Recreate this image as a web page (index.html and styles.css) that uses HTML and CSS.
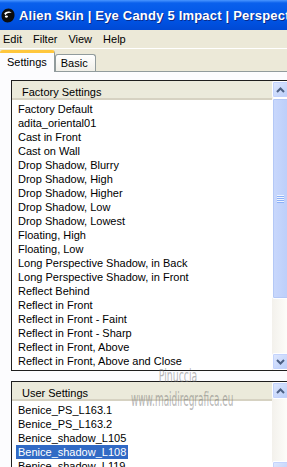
FILE: index.html
```html
<!DOCTYPE html>
<html lang="en">
<head>
    <meta charset="UTF-8">
    <title>Eye Candy 5 Impact</title>
    <link rel="stylesheet" href="styles.css">
</head>
<body>
    <div class="window">
        <div class="title-bar">
            <svg class="app-icon" width="14" height="15" viewBox="0 0 14 15">
                <path d="M7.5 0.5 C11.5 0.5 13.5 3.5 13.5 7 C13.5 11.5 10.5 14.5 6.5 14.5 C2.8 14.5 0.5 11.5 0.5 8 C0.5 3.8 3.5 0.5 7.5 0.5 Z" fill="#0d0d0d"/>
                <path d="M3.2 5.6 C4.8 3.2 8.6 2.8 10.6 5 C8.4 4.4 6 5 4.4 7.2 Z" fill="#fff"/>
                <ellipse cx="5.4" cy="8.6" rx="1.6" ry="1.1" fill="#fff"/>
            </svg>
            <span class="title-text">Alien Skin | Eye Candy 5 Impact | Perspective Shadow</span>
        </div>

        <div class="menu-bar">
            <span class="menu-item">Edit</span>
            <span class="menu-item">Filter</span>
            <span class="menu-item">View</span>
            <span class="menu-item">Help</span>
        </div>

        <div class="tab-strip">
            <div class="tab tab-active">Settings</div>
            <div class="tab">Basic</div>
        </div>

        <div class="tab-panel">
            <!-- factory presets -->
            <div class="listbox listbox-factory">
                <div class="list-main">
                    <div class="list-header">Factory Settings</div>
                    <ul class="list-items">
                        <li><span>Factory Default</span></li>
                        <li><span>adita_oriental01</span></li>
                        <li><span>Cast in Front</span></li>
                        <li><span>Cast on Wall</span></li>
                        <li><span>Drop Shadow, Blurry</span></li>
                        <li><span>Drop Shadow, High</span></li>
                        <li><span>Drop Shadow, Higher</span></li>
                        <li><span>Drop Shadow, Low</span></li>
                        <li><span>Drop Shadow, Lowest</span></li>
                        <li><span>Floating, High</span></li>
                        <li><span>Floating, Low</span></li>
                        <li><span>Long Perspective Shadow, in Back</span></li>
                        <li><span>Long Perspective Shadow, in Front</span></li>
                        <li><span>Reflect Behind</span></li>
                        <li><span>Reflect in Front</span></li>
                        <li><span>Reflect in Front - Faint</span></li>
                        <li><span>Reflect in Front - Sharp</span></li>
                        <li><span>Reflect in Front, Above</span></li>
                        <li><span>Reflect in Front, Above and Close</span></li>
                    </ul>
                </div>
                <div class="scrollbar">
                    <div class="sb-button">
                        <svg width="9" height="6" viewBox="0 0 9 6"><polyline points="1,5 4.5,1.5 8,5" fill="none" stroke="#4d6185" stroke-width="2"/></svg>
                    </div>
                    <div class="sb-thumb sb-thumb-factory">
                        <div class="grip"></div>
                    </div>
                    <div class="sb-track"></div>
                    <div class="sb-button">
                        <svg width="9" height="6" viewBox="0 0 9 6"><polyline points="1,1 4.5,4.5 8,1" fill="none" stroke="#4d6185" stroke-width="2"/></svg>
                    </div>
                </div>
            </div>

            <!-- user presets -->
            <div class="listbox listbox-user">
                <div class="list-main">
                    <div class="list-header">User Settings</div>
                    <ul class="list-items">
                        <li><span>Benice_PS_L163.1</span></li>
                        <li><span>Benice_PS_L163.2</span></li>
                        <li><span>Benice_shadow_L105</span></li>
                        <li><span class="selected">Benice_shadow_L108</span></li>
                        <li><span>Benice_shadow_L119</span></li>
                    </ul>
                </div>
                <div class="scrollbar">
                    <div class="sb-button">
                        <svg width="9" height="6" viewBox="0 0 9 6"><polyline points="1,5 4.5,1.5 8,5" fill="none" stroke="#4d6185" stroke-width="2"/></svg>
                    </div>
                    <div class="sb-track"></div>
                    <div class="sb-button">
                        <svg width="9" height="6" viewBox="0 0 9 6"><polyline points="1,1 4.5,4.5 8,1" fill="none" stroke="#4d6185" stroke-width="2"/></svg>
                    </div>
                </div>
            </div>
        </div>

        <div class="watermark">
            <div class="wm-name">Pinuccia</div>
            <div class="wm-site">www.maidiregrafica.eu</div>
        </div>
    </div>
</body>
</html>
```

FILE: styles.css
```css
body {
    margin: 0;
    font-family: 'Liberation Sans', Arial, sans-serif;
    font-size: 11px;
    background-color: #fcfcfe;
    overflow: hidden;
}

.window {
    position: relative;
    width: 287px;
    height: 467px;
    overflow: hidden;
}

/* title bar */
.title-bar {
    height: 30px;
    display: flex;
    align-items: center;
    padding-left: 1px;
    background: linear-gradient(#4a96ff 0, #0a60ec 3px, #0055e6 60%, #0049d4 100%);
    color: #fff;
    white-space: nowrap;
    overflow: hidden;
}

.app-icon {
    flex: none;
    margin: 1px 4px 0 0;
}

.title-text {
    font-size: 13px;
    font-weight: bold;
    letter-spacing: 0.2px;
    text-shadow: 1px 1px 0 #0a2a8a;
}

/* menu */
.menu-bar {
    height: 18px;
    line-height: 18px;
    background-color: #ece9d8;
    border-bottom: 1px solid #fff;
    padding-left: 3px;
    display: flex;
}

.menu-item {
    margin-right: 11px;
    color: #000;
}

/* tabs */
.tab-strip {
    height: 23px;
    background-color: #ece9d8;
    border-bottom: 1px solid #919b9c;
    display: flex;
    align-items: flex-end;
    box-sizing: border-box;
}

.tab {
    height: 17px;
    line-height: 16px;
    padding: 0 7px 0 5px;
    border: 1px solid #919b9c;
    border-bottom: none;
    border-radius: 3px 3px 0 0;
    background: linear-gradient(#fff, #f0efe8);
    box-sizing: border-box;
}

.tab-active {
    height: 22px;
    line-height: 18px;
    padding: 0 7px;
    margin-bottom: -1px;
    border-left: none;
    border-top: 3px solid #ffc73c;
    background: #fcfcfe;
    position: relative;
}

.tab-panel {
    padding: 8px 0 0 11px;
    background-color: #fcfcfe;
}

/* list boxes */
.listbox {
    display: flex;
    width: 277px;
    border: 1px solid #1e1e1e;
    background-color: #fff;
}

.listbox-factory {
    height: 289px;
    margin-bottom: 10px;
}

.listbox-user {
    height: 96px;
}

.list-main {
    flex: 1;
    overflow: hidden;
}

.list-header {
    height: 19px;
    line-height: 16px;
    padding: 3px 0 0 10px;
    box-sizing: border-box;
    background-color: #ebeadb;
    border-bottom: 2px solid #d6d2c2;
}

.list-items {
    list-style: none;
    margin: 0;
    padding: 2px 0 0 0;
}

.list-items li {
    height: 14px;
    line-height: 14px;
    white-space: nowrap;
}

.list-items span {
    display: inline-block;
    margin-left: 4px;
    padding: 0 2px;
}

.list-items .selected {
    background-color: #316ac5;
    color: #fff;
}

/* XP style scrollbar */
.scrollbar {
    width: 17px;
    flex: none;
    display: flex;
    flex-direction: column;
    background: linear-gradient(90deg, #f3f1ec, #fefefb);
}

.sb-button {
    height: 17px;
    flex: none;
    box-sizing: border-box;
    border: 1px solid #fff;
    border-radius: 2px;
    background: linear-gradient(135deg, #dfe8fe, #b9cdf9);
    display: flex;
    align-items: center;
    justify-content: center;
    box-shadow: inset 0 0 0 1px #c3d3fd;
}

.sb-thumb {
    flex: none;
    box-sizing: border-box;
    border: 1px solid #fff;
    border-radius: 2px;
    background: linear-gradient(90deg, #c9d8fc, #bccefa);
    box-shadow: inset 0 0 0 1px #b4c8f6;
    display: flex;
    align-items: center;
    justify-content: center;
}

.sb-thumb-factory {
    height: 201px;
}

.grip {
    width: 7px;
    height: 8px;
    background: repeating-linear-gradient(#eef4fe 0, #eef4fe 1px, #8cb0f8 1px, #8cb0f8 2px);
}

.sb-track {
    flex: 1;
}

/* watermark overlay */
.watermark {
    position: absolute;
    left: 78px;
    top: 366px;
    width: 200px;
    text-align: center;
    white-space: nowrap;
    font-family: 'DejaVu Sans', sans-serif;
    color: rgba(110, 110, 110, 0.5);
    pointer-events: none;
}

.wm-name {
    font-size: 17px;
    transform: scaleX(0.55);
}

.wm-site {
    font-size: 19px;
    margin-top: 2px;
    transform: scaleX(0.47);
}
```
